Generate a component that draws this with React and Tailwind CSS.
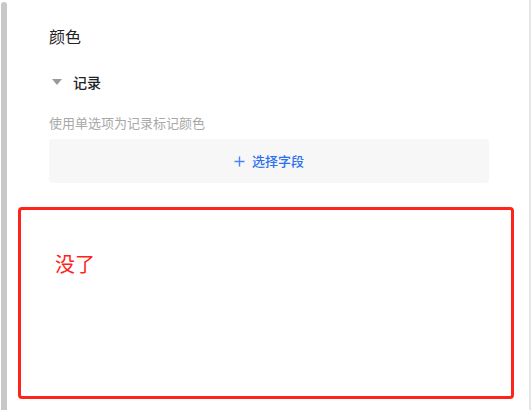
export default function App() {
  return (
    <div
      className="w-[532px] h-[410px] bg-white flex overflow-hidden"
      style={{ fontFamily: '"Noto Sans CJK SC", "Noto Sans", sans-serif' }}
    >
      <div className="w-[1px]" />
      <div className="w-[6px] mt-[2px] bg-[#c8c8c8] rounded-t-[3px]" />
      <div className="flex-1 flex flex-col pl-[11px]">
        <div className="pl-[31px] pr-[40px]">
          <div className="mt-[24px] h-[24px] text-[16px] leading-[24px] text-[#222]">颜色</div>
          <div className="mt-[23px] flex items-center h-[22px]">
            <svg width="10" height="6" viewBox="0 0 10 6" className="ml-[3px]">
              <path d="M0 0 L10 0 L5 6 Z" fill="#9a9a9a" />
            </svg>
            <span className="ml-[11px] text-[14px] leading-[22px] text-[#222] font-medium">记录</span>
          </div>
          <div className="mt-[21px] text-[13px] leading-[18px] text-[#a8a8a8]">使用单选项为记录标记颜色</div>
          <div className="mt-[7px] h-[44px] rounded-[4px] bg-[#f7f7f7] flex items-center justify-center gap-[7px]">
            <svg width="11" height="11" viewBox="0 0 11 11">
              <path d="M5.5 0.5 V10.5 M0.5 5.5 H10.5" stroke="#4c84f7" strokeWidth="1.4" />
            </svg>
            <span className="text-[13px] leading-[18px] text-[#2a6ff0] font-medium">选择字段</span>
          </div>
        </div>
        <div className="mt-[24px] w-[496px] h-[192px] shrink-0 border-[3px] border-[#ff2419] rounded-[4px] pl-[34px] pt-[40px]">
          <div className="text-[20px] leading-[28px] text-[#ff2419]">没了</div>
        </div>
      </div>
      <div className="w-[2px] bg-[#e6e6e6] mr-[1px]" />
    </div>
  );
}
